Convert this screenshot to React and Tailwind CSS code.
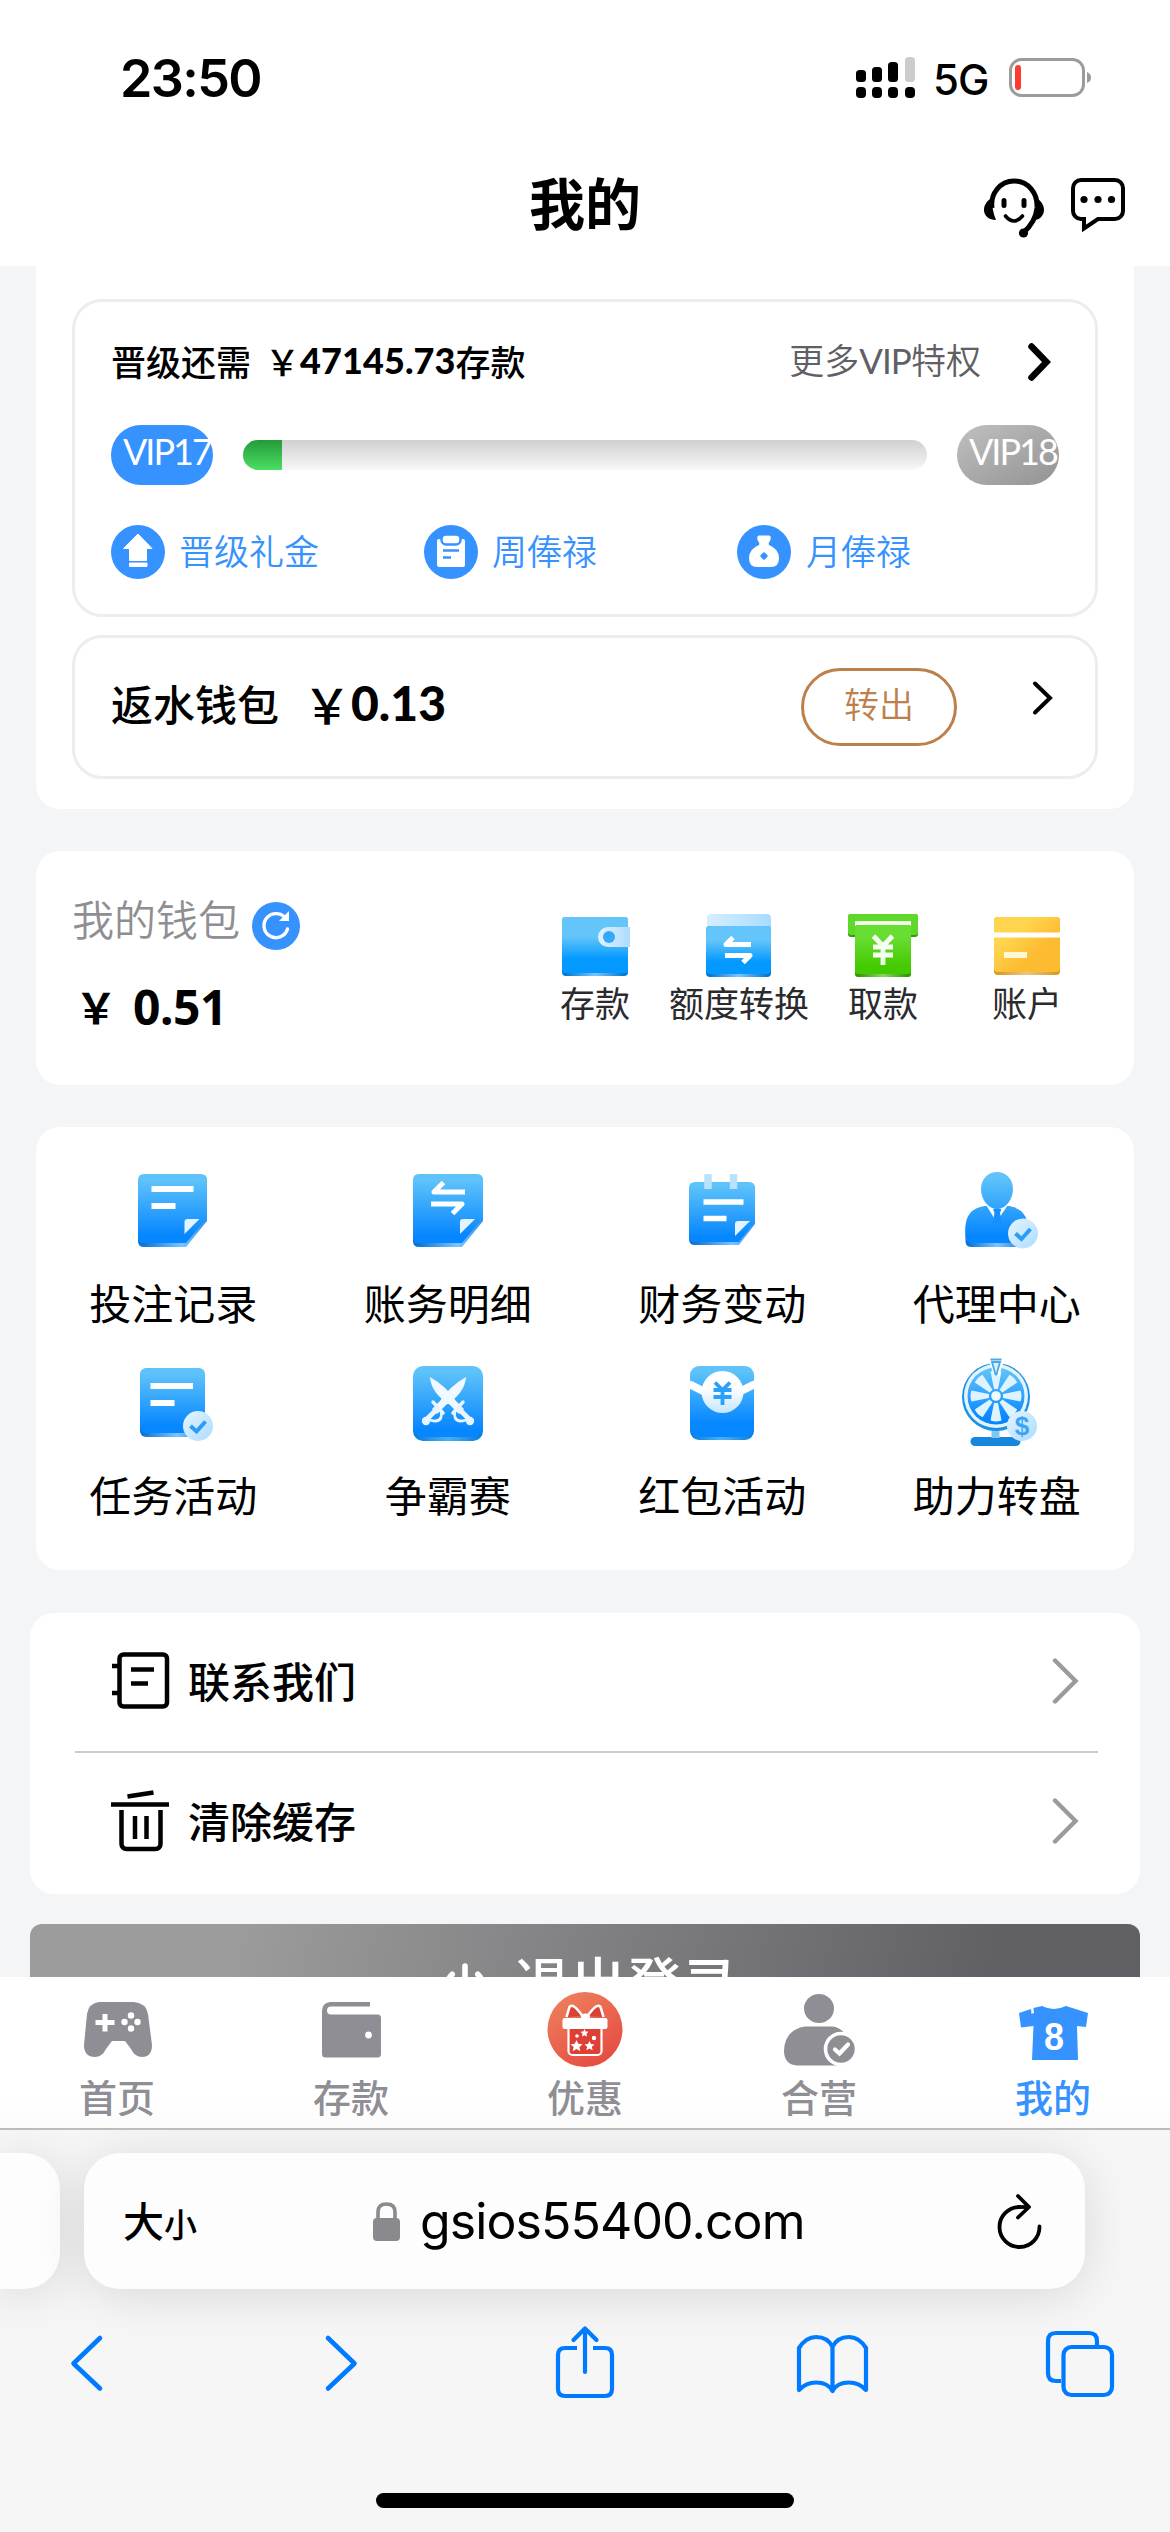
import React from "react";

const cjk = "font-['Noto_Sans_CJK_SC',sans-serif]";
const num = "font-['Lato','Noto_Sans_CJK_SC',sans-serif]";
const YUAN = "\uFFE5";

function Icon({ x, y, w, h, className = "", children }) {
  return (
    <svg width={w} height={h} viewBox={`${x} ${y} ${w} ${h}`} fill="none" className={`block shrink-0 ${className}`}>
      {children}
    </svg>
  );
}

function Blue({ id, y1, y2 }) {
  return (
    <linearGradient id={id} gradientUnits="userSpaceOnUse" x1="0" x2="0" y1={y1} y2={y2}>
      <stop offset="0.08" stopColor="#5fc3fa" />
      <stop offset="0.9" stopColor="#0686ff" />
    </linearGradient>
  );
}

function Shade({ id, x1, x2, dark = "#0b74d4", light = "#7cc4ff" }) {
  return (
    <linearGradient id={id} gradientUnits="userSpaceOnUse" x1={x1} x2={x2} y1="0" y2="0">
      <stop offset="0.05" stopColor={dark} />
      <stop offset="0.5" stopColor={light} />
      <stop offset="0.95" stopColor={dark} />
    </linearGradient>
  );
}

function Pale({ id }) {
  return (
    <linearGradient id={id} x1="0" x2="1" y1="0" y2="1">
      <stop offset="0" stopColor="#e4f5ff" />
      <stop offset="1" stopColor="#acdcff" />
    </linearGradient>
  );
}

function StatusBar() {
  return (
    <div className="flex h-[156px] items-center justify-between pl-[120px] pr-[78px]">
      <div className="pt-[1px] font-['Inter'] text-[52px] font-semibold leading-none tracking-[-1.600px]">23:50</div>
      <div className="flex items-center">
        <Icon x={856} y={56} w={60} h={44}>
          <g fill="#000">
            <rect x="856" y="87" width="10" height="11" rx="4" />
            <rect x="872" y="87" width="10" height="11" rx="4" />
            <rect x="888" y="87" width="10" height="11" rx="4" />
            <rect x="905" y="87" width="10" height="11" rx="4" />
            <rect x="856" y="70" width="10" height="12" rx="3.5" />
            <rect x="872" y="67" width="10" height="15" rx="3.5" />
            <rect x="888" y="62" width="10" height="20" rx="3.5" />
          </g>
          <rect x="905" y="57" width="10" height="25" rx="3.5" fill="#ccc" />
        </Icon>
        <div className="ml-[17px] w-[57px] pt-[3px] font-['Inter'] text-[42px] font-medium leading-none tracking-[-1px]">5G</div>
        <Icon x={1008} y={56} w={84} h={44} className="ml-[18px]">
          <rect x="1010.5" y="59.5" width="73" height="36" rx="11" stroke="#9b9b9b" strokeWidth="3" />
          <path d="M1087 72q4 1.500 4 5.500t-4 5.500z" fill="#9b9b9b" />
          <rect x="1015" y="65" width="6" height="25" rx="3" fill="#ff3b30" />
        </Icon>
      </div>
    </div>
  );
}

function Header() {
  return (
    <div className="grid h-[110px] grid-cols-[1fr_auto_1fr]">
      <div />
      <h1 className={`${cjk} pt-[17px] text-[56px] font-bold leading-none`}>我的</h1>
      <div className="flex items-start justify-end gap-[26px] pr-[43px] pt-[21px]">
        <Icon x={984} y={176} w={61} h={62}>
          <path d="M992 207C990 193 1000 180 1014 180S1038 192 1037 207C1036 218 1031 225 1023 232" stroke="#000" strokeWidth="5" />
          <path d="M992 197C986 200 984 205 984 209C984 215 989 219 996 219C993 212 992 205 992 197ZM1036 197C1042 200 1044 205 1044 209C1044 214 1040 219 1034 219C1036 212 1037 205 1036 197Z" fill="#000" />
          <path d="M1004 199.500v5M1024 199.500v5" stroke="#000" strokeWidth="5" strokeLinecap="round" />
          <path d="M1005.500 215q8.500 10 17 0" stroke="#000" strokeWidth="3.600" strokeLinecap="round" />
          <circle cx="1023.500" cy="232" r="4.600" fill="#000" />
        </Icon>
        <Icon x={1071} y={179} w={56} h={56}>
          <path d="M1081 182h34a8 8 0 0 1 8 8v23a8 8 0 0 1-8 8h-17l-14 9.500v-9.500h-3a8 8 0 0 1-8-8v-23a8 8 0 0 1 8-8z" stroke="#000" strokeWidth="4" />
          <circle cx="1084" cy="201.500" r="3.600" fill="#000" />
          <circle cx="1098" cy="201.500" r="3.600" fill="#000" />
          <circle cx="1111.500" cy="201.500" r="3.600" fill="#000" />
        </Icon>
      </div>
    </div>
  );
}

function VipPanel() {
  return (
    <section className="mx-[36px] h-[543px] rounded-b-[24px] bg-white px-[36px] pt-[33px]">
      <div className="h-[318px] rounded-[30px] border-[3px] border-[#ededed] px-[36px] pt-[33px]">
        <div className="flex h-[54px] items-center">
          <div className={`${cjk} flex items-center pb-[4px] text-[35px] font-medium leading-none`}>
            晋级还需<span className="ml-[14px]">{YUAN}</span>
            <span className="font-['Lato'] text-[36px] font-black tracking-[0.100px]">47145.73</span>存款
          </div>
          <div className={`${num} ml-auto mr-[46px] pb-[3px] text-[35px] font-[350] leading-none text-[#606064]`}>更多<span className="font-normal tracking-[-0.900px]">VIP</span>特权</div>
          <Icon x={1027} y={342} w={24} h={40} className="mr-[8px]">
            <path d="M1031.500 346.500l15 15.500l-15 15.500" stroke="#000" strokeWidth="6.500" strokeLinecap="round" />
          </Icon>
        </div>
        <div className="mt-[36px] flex h-[60px] items-center justify-between">
          <div className="h-[60px] w-[102px] whitespace-nowrap rounded-[30px] bg-[#3592ff] pl-[12px] pt-[6px] font-['Lato'] text-[36px] leading-[40px] tracking-[-2px] text-white">VIP17</div>
          <div className="h-[30px] w-[684px] overflow-hidden rounded-[15px] bg-linear-to-b from-[#d0d0d0] to-[#f8f8f8]">
            <div className="h-full w-[39px] bg-linear-to-b from-[#249b38] to-[#4be064]" />
          </div>
          <div className="h-[60px] w-[102px] whitespace-nowrap rounded-[30px] bg-linear-to-br from-[#c0c0c0] to-[#939393] pl-[12px] pt-[6px] font-['Lato'] text-[36px] leading-[40px] tracking-[-2px] text-white">VIP18</div>
        </div>
        <div className={`${cjk} mt-[40px] grid h-[54px] w-[939px] grid-cols-3 text-[35px] font-[350] leading-none text-[#3592ff]`}>
          <div className="flex items-center gap-[14px]">
            <Icon x={111} y={525} w={54} h={54}>
              <circle cx="138" cy="552" r="27" fill="#3592ff" />
              <path d="M138 534l14 14.500h-5.500v12h-17v-12h-6zM129.500 563h17.500v3.500h-17.500z" fill="#fff" stroke="#fff" strokeLinejoin="round" />
            </Icon>
            <span className="pb-[5px]">晋级礼金</span>
          </div>
          <div className="flex items-center gap-[14px]">
            <Icon x={424} y={525} w={54} h={54}>
              <circle cx="451" cy="552" r="27" fill="#3592ff" />
              <rect x="437" y="539" width="28" height="28" rx="2" fill="#fff" />
              <rect x="441.500" y="534.500" width="19" height="10" rx="4.500" fill="#fff" stroke="#3592ff" strokeWidth="2.500" />
              <path d="M443 550.500h16M443 557.500h8" stroke="#3592ff" strokeWidth="2.500" />
            </Icon>
            <span className="pb-[5px]">周俸禄</span>
          </div>
          <div className="flex items-center gap-[15px]">
            <Icon x={737} y={525} w={54} h={54}>
              <circle cx="764" cy="552" r="27" fill="#3592ff" />
              <path d="M758 541q-2-5 1-5.500h10q3 .500 1 5.500q-2 2-1 4q10 4 10 13q0 9-8 9h-14q-8 0-8-9q0-9 10-13q1-2-1-4z" fill="#fff" />
              <rect x="761" y="553" width="6" height="6" rx="1.500" fill="#3592ff" transform="rotate(45 764 556)" />
            </Icon>
            <span className="pb-[5px]">月俸禄</span>
          </div>
        </div>
      </div>
      <div className="mt-[18px] flex h-[144px] items-center rounded-[30px] border-[3px] border-[#ededed] pl-[36px] pr-[41px]">
        <div className={`${cjk} flex items-center pb-[9px] text-[42px] font-medium leading-none`}>
          返水钱包<span className="ml-[24px] text-[48px]">{YUAN}</span>
          <span className="font-['Lato'] text-[48px] font-black">0.13</span>
        </div>
        <button className={`${cjk} ml-auto h-[78px] w-[156px] rounded-full border-[3px] border-[#bc814b] pb-[9px] text-[35px] font-[350] leading-none text-[#bc814b]`}>转出</button>
        <Icon x={1032} y={679} w={22} h={38} className="mb-[18px] ml-[75px]">
          <path d="M1035 683.500l15 14.500l-15 14.500" stroke="#000" strokeWidth="4" strokeLinecap="round" />
        </Icon>
      </div>
    </section>
  );
}

function walletIcons() {
  return [
    <Icon key="d" x={558} y={910} w={72} h={70}>
      <defs>
        <linearGradient id="wd" x1="0" x2="0" y1="0" y2="1"><stop offset=".35" stopColor="#63c5f9" /><stop offset=".75" stopColor="#0399ff" /></linearGradient>
        <Shade id="wds" x1="561" x2="627" dark="#0179d0" />
        <linearGradient id="wdp" x1="0" x2="1" y1="0" y2="0"><stop stopColor="#dff2ff" /><stop offset="1" stopColor="#addcff" /></linearGradient>
      </defs>
      <rect x="561" y="917" width="66" height="59" rx="4" fill="url(#wds)" />
      <rect x="561" y="917" width="66" height="56" rx="3" fill="url(#wd)" />
      <path d="M607 927h22v20h-22a10 10 0 0 1 0-20z" fill="url(#wdp)" />
      <circle cx="608" cy="937" r="6" fill="#35a8fb" />
    </Icon>,
    <Icon key="t" x={702} y={910} w={72} h={70}>
      <defs>
        <linearGradient id="wt" x1="0" x2="0" y1="0" y2="1"><stop offset=".3" stopColor="#63c5f9" /><stop offset=".75" stopColor="#0399ff" /></linearGradient>
        <Shade id="wts" x1="705" x2="770" dark="#0179d0" />
        <linearGradient id="wtp" x1="0" x2="1" y1="0" y2="0"><stop stopColor="#d6eeff" /><stop offset="1" stopColor="#a9dbff" /></linearGradient>
      </defs>
      <rect x="706" y="914" width="64" height="24" rx="4" fill="url(#wtp)" />
      <rect x="705" y="926" width="65" height="51" rx="4" fill="url(#wts)" />
      <rect x="705" y="926" width="65" height="48" rx="4" fill="url(#wt)" />
      <path d="M750 944.500h-25l7-7M724 955.500h25l-7 7" stroke="#fff" strokeWidth="5" strokeLinejoin="round" />
    </Icon>,
    <Icon key="w" x={846} y={910} w={72} h={70}>
      <defs>
        <linearGradient id="ww" x1="0" x2="0" y1="0" y2="1"><stop offset=".25" stopColor="#68dd32" /><stop offset=".85" stopColor="#44ca00" /></linearGradient>
        <Shade id="wws" x1="854" x2="910" dark="#329700" light="#8ad46a" />
      </defs>
      <rect x="847" y="914" width="70" height="23" rx="3" fill="#369d0a" />
      <rect x="847" y="914" width="70" height="21" rx="3" fill="#5ed829" />
      <path d="M854 921h56v6h-56z" fill="#f0fbe8" />
      <rect x="854" y="925" width="56" height="52" rx="3" fill="url(#wws)" />
      <rect x="854" y="925" width="56" height="49" rx="3" fill="url(#ww)" />
      <path d="M872.500 936l9.500 10l9.500-10M872 947h20M872 955h20M882 945v20" stroke="#f4fff0" strokeWidth="4.800" />
    </Icon>,
    <Icon key="a" x={990} y={910} w={72} h={70}>
      <defs>
        <linearGradient id="wa" x1="0" x2="1" y1="0" y2="1"><stop offset=".3" stopColor="#ffd54d" /><stop offset=".65" stopColor="#fdbb32" /></linearGradient>
        <Shade id="was" x1="993" x2="1059" dark="#d79b24" light="#e8c782" />
      </defs>
      <rect x="993" y="917" width="66" height="58" rx="4" fill="url(#was)" />
      <rect x="993" y="917" width="66" height="55" rx="4" fill="url(#wa)" />
      <path d="M993 935h66" stroke="#fff" strokeWidth="5" />
      <path d="M1003 955h23" stroke="#fff6d8" strokeWidth="6" />
    </Icon>,
  ];
}

function Wallet() {
  const icons = walletIcons();
  return (
    <section className="mx-[36px] mt-[42px] flex h-[234px] rounded-[24px] bg-white pl-[36px] pr-[35px]">
      <div className="w-[451px]">
        <div className={`${cjk} mt-[48px] flex h-[54px] items-center text-[42px] font-[350] leading-none text-[#8e8e93]`}>
          <span className="pb-[16px]">我的钱包</span>
          <Icon x={252} y={902} w={48} h={48} className="ml-[12px]">
            <circle cx="276" cy="926" r="24" fill="#3592ff" />
            <path d="M286 919a12 12 0 1 0 1.500 10" stroke="#fff" strokeWidth="3.400" strokeLinecap="round" />
            <path d="M289 911v10h-10z" fill="#fff" />
          </Icon>
        </div>
        <div className={`${cjk} ml-[3px] mt-[30px] flex items-center text-[42px] font-bold leading-none`}>
          <span className="pb-[2px]">{YUAN}</span>
          <span className="ml-[16px] font-['Noto_Sans'] text-[48px] font-bold tracking-[-0.5px]">0.51</span>
        </div>
      </div>
      <div className="grid w-[576px] grid-cols-4 pt-[59px]">
        {["存款", "额度转换", "取款", "账户"].map((t, i) => (
          <div key={t} className={`${cjk} flex flex-col items-center whitespace-nowrap text-[35px] font-normal leading-none text-[#2b2b2d]`}>
            {icons[i]}
            <span className="mt-[4px]">{t}</span>
          </div>
        ))}
      </div>
    </section>
  );
}

function CheckBadge({ cx, cy, id }) {
  return (
    <>
      <defs><Pale id={id} /></defs>
      <circle cx={cx} cy={cy} r="15" fill={`url(#${id})`} />
      <path d={`M${cx - 7.5} ${cy}l6 5.500l9-10`} stroke="#2d9cf6" strokeWidth="4" />
    </>
  );
}

function Fold({ x, y }) {
  return <path d={`M${x} ${y + 15}v-12q0-3 3-3h12z`} fill="#e2f4ff" />;
}

function Sword({ flip }) {
  return (
    <g transform={flip ? "translate(892 0) scale(-1 1)" : undefined}>
      <path d="M428 1377q16 9 26 24l8 8l-5 5l-9-9q-19-12-20-28z" fill="#f0f9ff" />
      <path d="M455 1407l14 14" stroke="#e6f5ff" strokeWidth="5" />
      <path d="M451 1413l10-11" stroke="#e6f5ff" strokeWidth="3.500" strokeLinecap="round" />
      <path d="M453 1411q-2 9 5 10q6 0 9-3" stroke="#e6f5ff" strokeWidth="2.800" />
      <circle cx="468" cy="1421" r="4.200" fill="#e6f5ff" />
    </g>
  );
}

const menu = [
  ["投注记录", (
    <Icon x={133} y={1164} w={80} h={90}>
      <defs><Blue id="m1" y1="1174" y2="1243" /><Shade id="m1s" x1="138" x2="225" /></defs>
      <path d="M144 1178h63v43l-21 26h-42q-6 0-6-6v-60z" fill="url(#m1s)" />
      <path d="M144 1174h57q6 0 6 6v38l-21 25h-42q-6 0-6-6v-57q0-6 6-6z" fill="url(#m1)" />
      <path d="M151.500 1189h42M151.500 1206h24" stroke="#fff" strokeWidth="6" />
      <Fold x={184.500} y={1219} />
    </Icon>
  )],
  ["账务明细", (
    <Icon x={406} y={1164} w={80} h={90}>
      <defs><Blue id="m2" y1="1174" y2="1243" /><Shade id="m2s" x1="411" x2="500" /></defs>
      <path d="M417 1178h64v43l-21 26h-43q-6 0-6-6v-60z" fill="url(#m2s)" />
      <path d="M417 1174h58q6 0 6 6v38l-21 25h-43q-6 0-6-6v-57q0-6 6-6z" fill="url(#m2)" />
      <path d="M463 1192h-31l9.500-9.500M429 1204h31l-9.500 9.500" stroke="#fff" strokeWidth="5" strokeLinejoin="round" />
      <Fold x={458} y={1219} />
    </Icon>
  )],
  ["财务变动", (
    <Icon x={681} y={1164} w={80} h={90}>
      <defs><Blue id="m3" y1="1180" y2="1243" /><Shade id="m3s" x1="688" x2="775" /></defs>
      <path d="M694 1186h60v38l-16 21h-44q-6 0-6-6v-50z" fill="url(#m3s)" />
      <path d="M694 1182h54q6 0 6 6v34l-16 20h-44q-6 0-6-6v-48q0-6 6-6z" fill="url(#m3)" />
      <path d="M707 1174v15M732.500 1174v15" stroke="#b9e2ff" strokeWidth="7.500" />
      <path d="M702.500 1202h40M702.500 1218.500h23" stroke="#fff" strokeWidth="5.600" />
      <Fold x={734} y={1221} />
    </Icon>
  )],
  ["代理中心", (
    <Icon x={954.5} y={1164} w={80} h={90} className="overflow-visible">
      <defs><Blue id="m4" y1="1172" y2="1243" /><Shade id="m4s" x1="962" x2="1028" /></defs>
      <path d="M963 1226h63v15q0 6-6 6h-51q-6 0-6-6z" fill="url(#m4s)" />
      <path d="M982 1206h25q19 4 19 25v12h-57q-6-1-6-7v-8q0-19 19-22z" fill="url(#m4)" />
      <path d="M983 1204l11 18l12-18z" fill="#fff" />
      <path d="M990.500 1209h8.500l-1.500 4l2 10l-5 7l-4.500-7l2-10z" fill="#188fff" />
      <path d="M994.500 1172c9 0 16 7 16 17s-7 20-16 20s-16-10-16-20s7-17 16-17z" fill="url(#m4)" />
      <CheckBadge cx={1020.500} cy={1233.500} id="m4b" />
    </Icon>
  )],
  ["任务活动", (
    <Icon x={133} y={1356} w={80} h={90}>
      <defs><Blue id="m5" y1="1368" y2="1433" /><Shade id="m5s" x1="139" x2="215" /></defs>
      <rect x="140" y="1370" width="65" height="67" rx="6" fill="url(#m5s)" />
      <rect x="140" y="1368" width="65" height="65" rx="6" fill="url(#m5)" />
      <path d="M150.500 1386h42.500M150.500 1403h24" stroke="#fff" strokeWidth="6" />
      <CheckBadge cx={198} cy={1426} id="m5b" />
    </Icon>
  )],
  ["争霸赛", (
    <Icon x={406} y={1356} w={80} h={90}>
      <defs><Blue id="m6" y1="1366" y2="1437" /><Shade id="m6s" x1="411" x2="481" light="#4ab0f5" dark="#0b80dd" /></defs>
      <rect x="411" y="1370" width="70" height="71" rx="10" fill="url(#m6s)" />
      <rect x="411" y="1366" width="70" height="71" rx="10" fill="url(#m6)" />
      <Sword />
      <Sword flip />
    </Icon>
  )],
  ["红包活动", (
    <Icon x={681} y={1356} w={80} h={90}>
      <defs>
        <Blue id="m7" y1="1366" y2="1430" /><Shade id="m7s" x1="688" x2="754" light="#4ab0f5" dark="#0b80dd" />
        <linearGradient id="m7c" x1="0" x2="0" y1="0" y2="1"><stop offset=".4" stopColor="#fff" /><stop offset="1" stopColor="#c4e6ff" /></linearGradient>
      </defs>
      <rect x="689" y="1370" width="64" height="70" rx="9" fill="url(#m7s)" />
      <rect x="689" y="1366" width="64" height="71" rx="9" fill="url(#m7)" />
      <path d="M688 1384l16 8M754 1384l-16 8" stroke="#fff" strokeWidth="8" />
      <circle cx="721.500" cy="1392" r="21" fill="url(#m7c)" />
      <path d="M714 1382.500l7.500 7.500l7.500-7.500M712.500 1390h18M712.500 1397h18M721.500 1388v17" stroke="#2ba0fb" strokeWidth="3.800" />
    </Icon>
  )],
  ["助力转盘", (
    <Icon x={954.5} y={1356} w={80} h={90} className="overflow-visible">
      <defs><Blue id="m8" y1="1365" y2="1425" /><Pale id="m8b" /></defs>
      <rect x="968" y="1437" width="50" height="9" rx="4.500" fill="#1687dc" />
      <path d="M989 1429h8v9h-8z" fill="#7ec8f5" />
      <circle cx="993.500" cy="1397" r="34" fill="#1a90e6" />
      <circle cx="993.500" cy="1396" r="32" fill="#e3f4ff" />
      <circle cx="993.500" cy="1396" r="28.500" fill="url(#m8)" />
      {[0, 45, 90, 135, 180, 225, 270, 315].map((a) => (
        <path key={a} d="M1000.500 1394l17.500-3.500q2 5.500 0 11l-17.500-3.500z" fill="#ddf3ff" transform={`rotate(${a} 993.5 1396)`} />
      ))}
      <circle cx="993.500" cy="1396" r="4.800" fill="#effaff" />
      <path d="M986 1359h16l-5.500 17h-5z" fill="#fff" />
      <path d="M988 1359.500h11M989.500 1362l3.500 12.500h1l3.500-12.500z" fill="#d4efff" stroke="#4aa9e8" strokeWidth="1.800" />
      <circle cx="1019.500" cy="1426" r="15" fill="url(#m8b)" />
      <text x="1019.500" y="1435" textAnchor="middle" fontSize="26" fontWeight="700" fill="#3aa5f5" className="font-['Liberation_Sans']">$</text>
    </Icon>
  )],
];

function Menu() {
  return (
    <section className="mx-[36px] mt-[42px] grid h-[443px] auto-rows-[192px] grid-cols-4 rounded-[24px] bg-white pt-[37px]">
      {menu.map(([label, icon]) => (
        <div key={label} className={`${cjk} flex flex-col items-center text-[42px] font-normal leading-none`}>
          {icon}
          <span className="mt-[27px]">{label}</span>
        </div>
      ))}
    </section>
  );
}

function Row({ icon, label }) {
  return (
    <div className="flex h-[138px] items-center pb-[3px] pl-[35px] pr-[18px]">
      {icon}
      <span className={`${cjk} ml-[18px] pb-[2px] text-[42px] font-medium leading-none`}>{label}</span>
      <svg width="28" height="46" viewBox="0 0 28 46" fill="none" className="ml-auto">
        <path d="M3 2.500l20.500 20.500l-20.500 20.500" stroke="#9b9b9b" strokeWidth="4.400" strokeLinecap="round" />
      </svg>
    </div>
  );
}

function Settings() {
  return (
    <section className="mx-[30px] mt-[43px] h-[281px] rounded-[24px] bg-white pl-[45px] pr-[42px]">
      <Row
        label="联系我们"
        icon={
          <Icon x={109} y={1650} w={60} h={61}>
            <rect x="118.500" y="1654.500" width="47.500" height="52" rx="4" stroke="#000" strokeWidth="4.500" />
            <path d="M111 1666h8M111 1693h8M130 1669.500h23M130 1683.500h17" stroke="#000" strokeWidth="4.500" />
          </Icon>
        }
      />
      <div className="h-[2px] bg-[#cbcbd0]" />
      <Row
        label="清除缓存"
        icon={
          <Icon x={109} y={1790} w={60} h={62}>
            <path d="M110 1804.500h58M126.500 1796.500l26-4M120.500 1810v34a5 5 0 0 0 5 5h29a5 5 0 0 0 5-5v-34M134 1816v23M145.500 1816v23" stroke="#000" strokeWidth="4.500" />
          </Icon>
        }
      />
    </section>
  );
}

function Logout() {
  return (
    <div className="mx-[30px] mt-[30px] h-[53px] overflow-hidden">
      <button className="flex h-[126px] w-full items-start justify-center rounded-[12px] bg-[linear-gradient(105deg,#9c9c9c_18%,#616065_85%)] pl-[9px] text-white">
        <svg width="48" height="48" viewBox="0 0 24 24" fill="none" stroke="currentColor" strokeWidth="2.800" strokeLinecap="round" className="mt-[37px]">
          <path d="M12 2.500v9M18.400 6.600a9 9 0 1 1-12.800 0" />
        </svg>
        <span className={`${cjk} ml-[25px] mt-[28px] text-[56px] font-medium leading-none`}>退出登录</span>
      </button>
    </div>
  );
}

const tabs = [
  ["首页", (
    <Icon x={79} y={1992} w={76} h={75}>
      <path d="M99 2002h35q12 1 14 12l4 31q0 12-10 12q-7 0-11-8l-6-8h-13l-6 8q-4 8-11 8q-11 0-11-12l3-31q2-11 12-12z" fill="#8f8e94" />
      <path d="M95.500 2022.500h19M105 2014v17.500" stroke="#fff" strokeWidth="5" />
      <g fill="#fff"><circle cx="131" cy="2015.500" r="3.200" /><circle cx="131" cy="2028.500" r="3.200" /><circle cx="124.500" cy="2022" r="3.200" /><circle cx="137.500" cy="2022" r="3.200" /></g>
    </Icon>
  )],
  ["存款", (
    <Icon x={313} y={1992} w={76} h={75}>
      <path d="M370 2002h-40q-8 1-8 9v43q0 3.500 3.500 3.500h52q3.500 0 3.500-3.500v-36q0-3.500-3.500-3.500h-46.500q-4 0-4-4t4-4h39z" fill="#8f8e94" />
      <circle cx="368.500" cy="2035" r="3.400" fill="#fff" />
    </Icon>
  )],
  ["优惠", (
    <Icon x={547.5} y={1992} w={76} h={75}>
      <defs><linearGradient id="gift" x1="0.200" x2="0.800" y1="0" y2="1"><stop stopColor="#ee7f5d" /><stop offset="1" stopColor="#e44a40" /></linearGradient></defs>
      <circle cx="585.500" cy="2029.500" r="37.500" fill="url(#gift)" />
      <path d="M569 2027h33v24a4 4 0 0 1-4 4h-25a4 4 0 0 1-4-4z" fill="#dd4034" stroke="#fff" strokeWidth="2.200" />
      <rect x="563" y="2018" width="45" height="11" rx="2" fill="#fff" />
      <path d="M583 2016q-10-14-13-9l-3 10M588 2016q10-14 13-9l3 10" fill="#dd4034" stroke="#fff" strokeWidth="2.600" strokeLinejoin="round" />
      <ellipse cx="586" cy="2017" rx="4.500" ry="3.500" fill="#fff" />
      <path d="M577 2040l1.800 3.800l4.200.400l-3.100 2.900l.900 4.200l-3.800-2.200l-3.800 2.200l.900-4.200l-3.100-2.900l4.200-.400zM590 2041l1.500 3l3.500.400l-2.600 2.400l.700 3.500l-3.100-1.800l-3.100 1.800l.700-3.500l-2.600-2.400l3.500-.400zM585 2029l1.200 2.500l2.800.300l-2 2l.500 2.800l-2.500-1.400l-2.500 1.400l.500-2.800l-2-2l2.800-.300z" fill="#fff" />
      <circle cx="594.500" cy="2038" r="2.200" fill="#fff" /><circle cx="577.500" cy="2036" r="1.800" fill="#fff" />
    </Icon>
  )],
  ["合营", (
    <Icon x={781} y={1992} w={76} h={75}>
      <ellipse cx="819" cy="2008.500" rx="15" ry="14.500" fill="#8f8e94" />
      <path d="M805 2026.500h27q8 0 14 9v30h-49q-13-1-13-15q1-21 21-24z" fill="#8f8e94" />
      <circle cx="841" cy="2049" r="15.500" fill="#8f8e94" stroke="#fff" strokeWidth="3.600" />
      <path d="M835 2049.500l4.500 4l8.500-9" stroke="#fff" strokeWidth="4.200" strokeLinecap="round" />
      <path d="M847 2026h10v8h-6z" fill="#fff" />
    </Icon>
  )],
  ["我的", (
    <Icon x={1015} y={1992} w={76} h={75}>
      <path d="M1042 2006q11.500 6 24 0l22 7l-2 14l-9-1l1 34h-46l1.500-34l-12.500 1.500l-2-14.500l12-4l.500 5l2.500-1l-.500-5z" fill="#3592ff" />
      <text x="1054" y="2050" textAnchor="middle" fontSize="39" fontWeight="700" fill="#fff" textLength="20" lengthAdjust="spacingAndGlyphs" className="font-['Liberation_Sans']">8</text>
    </Icon>
  )],
];

function TabBar() {
  return (
    <nav className="grid h-[151px] grid-cols-5 bg-linear-to-b from-white from-80% to-[#fbfbfb] pt-[15px]">
      {tabs.map(([label, icon], i) => (
        <div key={label} className={`${cjk} flex flex-col items-center text-[38px] font-medium leading-none ${i === 4 ? "text-[#3592ff]" : "text-[#8f8e94]"}`}>
          {icon}
          <span className="mt-[10px]">{label}</span>
        </div>
      ))}
    </nav>
  );
}

function Browser() {
  return (
    <div className="h-[404px] overflow-hidden border-t-2 border-[#bcbcbe] bg-[#f6f6f6] pt-[23px]">
      <div className="flex h-[136px]">
        <div className="w-[60px] rounded-r-[36px] bg-[#fdfdfd] shadow-[0_6px_50px_rgba(0,0,0,0.12)]" />
        <div className="ml-[24px] flex w-[1001px] items-center rounded-[36px] bg-[#fdfdfd] pl-[39px] pr-[42px] shadow-[0_6px_50px_rgba(0,0,0,0.12)]">
          <div className={`${cjk} flex w-[76px] items-baseline pb-[3px] text-[41px] font-medium leading-none`}>大<span className="text-[33px]">小</span></div>
          <Icon x={372} y={2199} w={30} h={43} className="ml-[173px]">
            <path d="M378 2218v-7q0-8 8.500-8t8.500 8v7" stroke="#8a898e" strokeWidth="3.600" />
            <rect x="373" y="2217" width="27" height="23" rx="4" fill="#8a898e" />
          </Icon>
          <div className="ml-[18px] whitespace-nowrap font-['Inter'] text-[50px] font-normal leading-none tracking-[-0.900px]">gsios55400.com</div>
          <Icon x={996} y={2190} w={48} h={58} className="ml-auto">
            <path d="M1020.500 2205a20 20 0 1 0 20 19.500" stroke="#000" strokeWidth="3.800" strokeLinecap="round" />
            <path d="M1019 2194l11 11l-11 10.500" stroke="#000" strokeWidth="3.800" strokeLinecap="round" strokeLinejoin="round" />
            <path d="M1019 2205h11" stroke="#000" strokeWidth="3.800" />
          </Icon>
        </div>
      </div>
      <div className="mt-[36px] flex h-[76px] items-center pl-[69px]">
        <Icon x={69} y={2326} w={36} h={76}>
          <path d="M100 2339l-26.500 25.500l26.500 25" stroke="#007aff" strokeWidth="4.600" strokeLinecap="round" strokeLinejoin="round" />
        </Icon>
        <Icon x={324} y={2326} w={36} h={76} className="ml-[219px]">
          <path d="M328 2339l26.500 25.500l-26.500 25" stroke="#007aff" strokeWidth="4.600" strokeLinecap="round" strokeLinejoin="round" />
        </Icon>
        <Icon x={555} y={2325} w={60} h={76} className="ml-[195px]">
          <path d="M577 2348h-12q-7 0-7 7v34q0 7 7 7h40q7 0 7-7v-34q0-7-7-7h-12" stroke="#007aff" strokeWidth="4.200" />
          <path d="M585 2372v-43M573.500 2340l11.500-11.500l11.500 11.500" stroke="#007aff" strokeWidth="4.200" strokeLinecap="round" strokeLinejoin="round" />
        </Icon>
        <Icon x={795} y={2325} w={75} h={76} className="ml-[180px]">
          <path d="M799 2390v-42q7-11 17-11q12 0 16.500 10q4.500-10 16.500-10q10 0 17 11v42q-7-7.500-17-7.500q-12 0-16.500 8.500q-4.500-8.500-16.500-8.500q-10 0-17 7.500zM832.500 2347v43" stroke="#007aff" strokeWidth="4.200" strokeLinejoin="round" />
        </Icon>
        <Icon x={1044} y={2325} w={72} h={76} className="ml-[174px]">
          <path d="M1061 2381h-5q-8 0-8-8v-32q0-8 8-8h33q8 0 8 8v4" stroke="#007aff" strokeWidth="4.200" />
          <rect x="1063.500" y="2347" width="48.500" height="48" rx="8" stroke="#007aff" strokeWidth="4.200" />
        </Icon>
      </div>
      <div className="mx-auto mt-[92px] h-[15px] w-[418px] rounded-full bg-black" />
    </div>
  );
}

export default function App() {
  return (
    <main className="h-[2532px] w-[1170px] overflow-hidden bg-[#f4f5f7] text-black">
      <div className="bg-white">
        <StatusBar />
        <Header />
      </div>
      <VipPanel />
      <Wallet />
      <Menu />
      <Settings />
      <Logout />
      <TabBar />
      <Browser />
    </main>
  );
}
